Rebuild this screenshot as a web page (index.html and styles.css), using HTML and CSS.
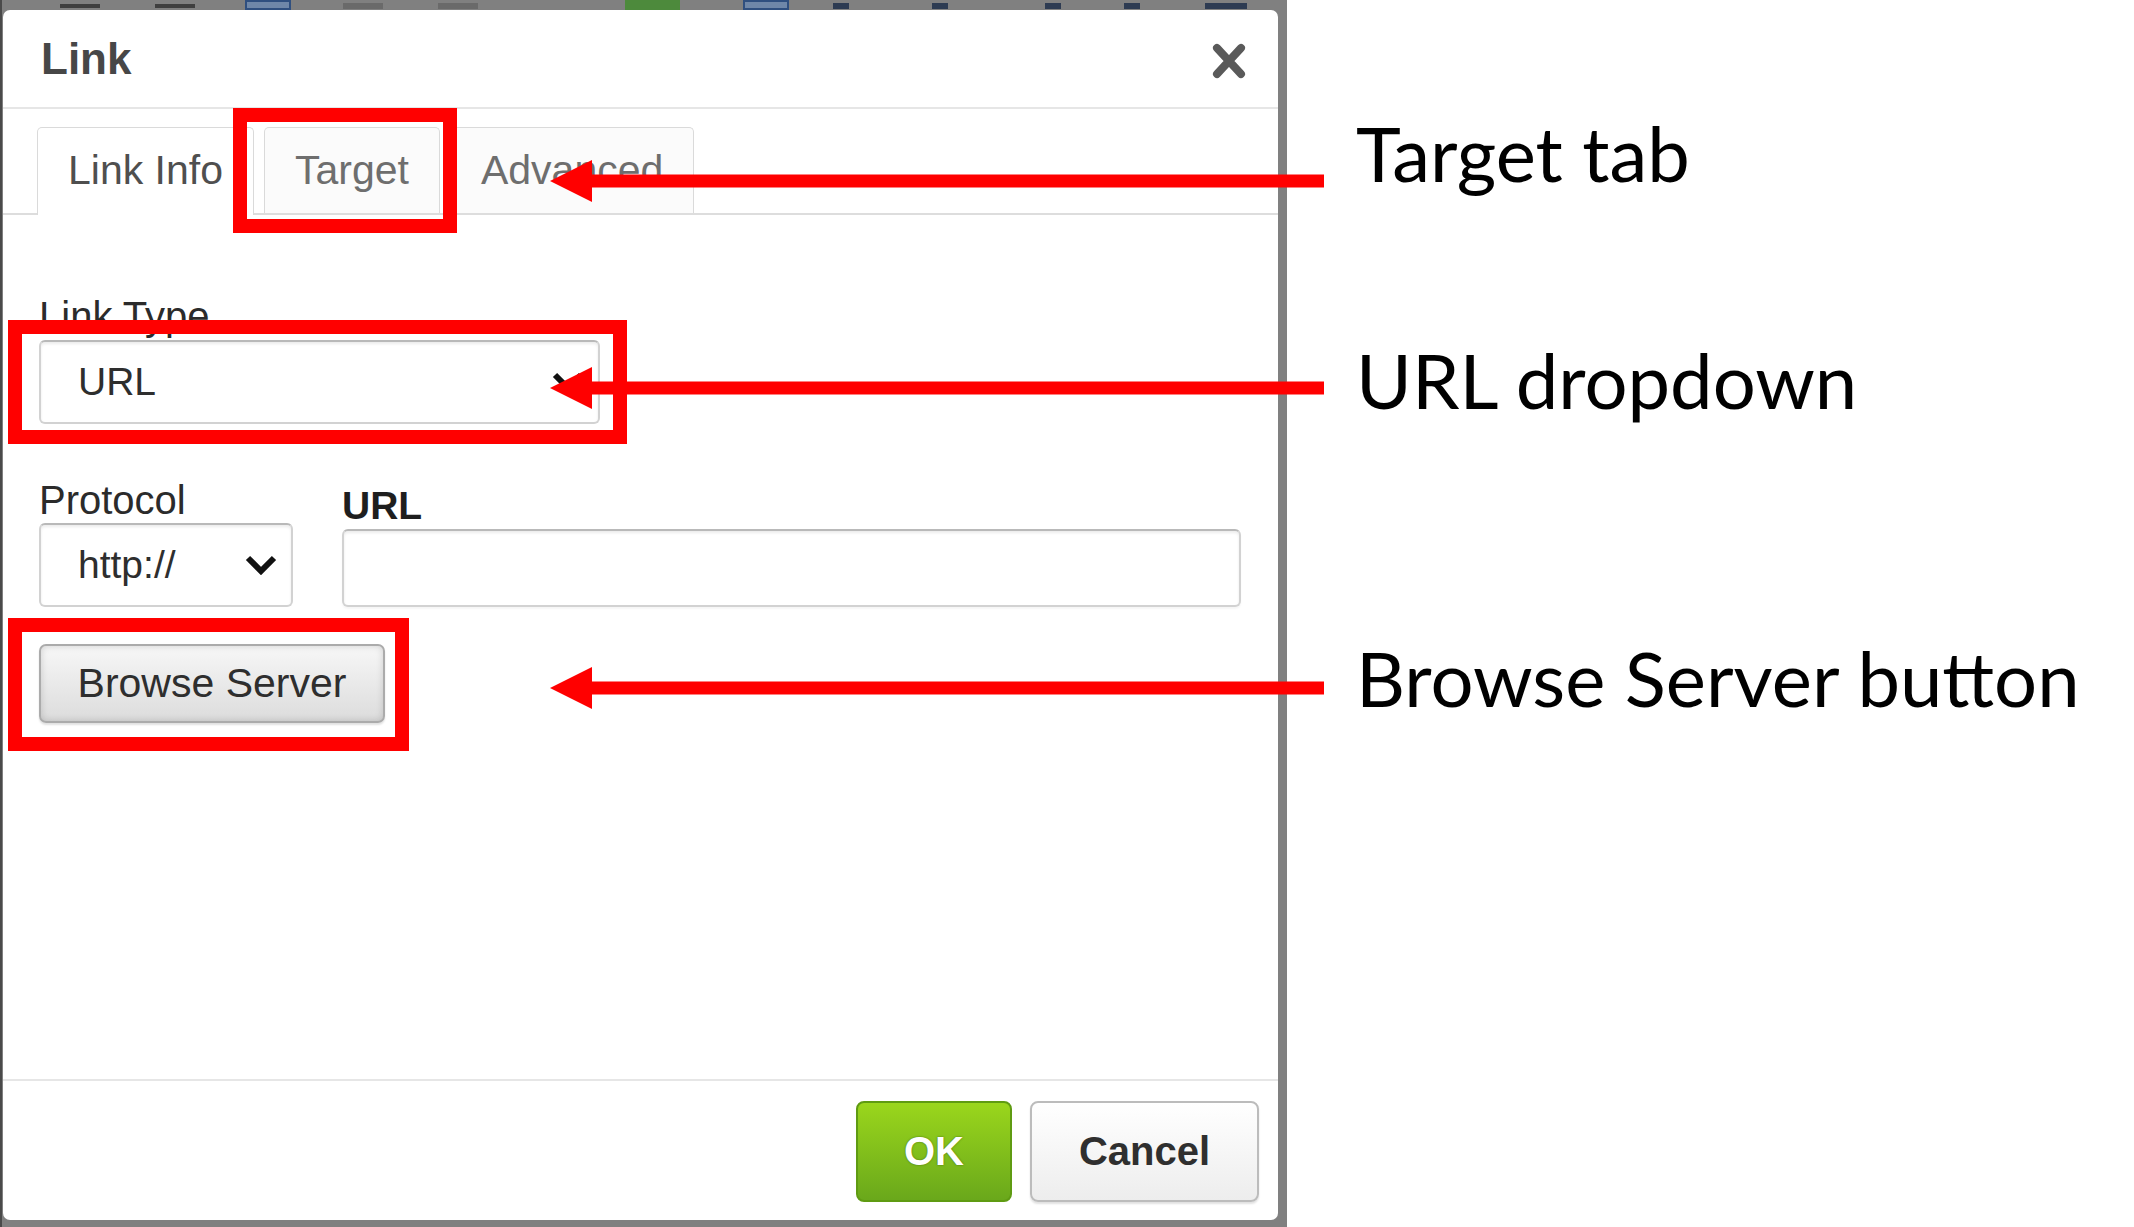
FILE: index.html
```html
<!DOCTYPE html>
<html lang="en">
<head>
    <meta charset="UTF-8">
    <title>Link dialog - annotated</title>
    <link rel="stylesheet" href="styles.css">
</head>
<body>
    <div class="page">
        <div class="editor">
            <div class="toolbar">
                <span class="tb tb-dash" style="margin-left: 57px;"></span>
                <span class="tb tb-dash" style="margin-left: 55px;"></span>
                <span class="tb tb-blue" style="margin-left: 50px;"></span>
                <span class="tb tb-grey" style="margin-left: 52px;"></span>
                <span class="tb tb-grey" style="margin-left: 55px;"></span>
                <span class="tb tb-green" style="margin-left: 147px;"></span>
                <span class="tb tb-blue" style="margin-left: 63px;"></span>
                <span class="tb tb-dark" style="margin-left: 44px;"></span>
                <span class="tb tb-dark" style="margin-left: 83px;"></span>
                <span class="tb tb-dark" style="margin-left: 97px;"></span>
                <span class="tb tb-dark" style="margin-left: 63px;"></span>
                <span class="tb tb-dark wide" style="margin-left: 65px;"></span>
            </div>

            <div class="dialog">
                <div class="dialog-title">
                    <span>Link</span>
                    <svg class="close" width="36" height="38" viewBox="0 0 36 38">
                        <path d="M6 6 L30 32 M30 6 L6 32" />
                    </svg>
                </div>

                <div class="tabs">
                    <div class="tab active">Link Info</div>
                    <div class="tab">Target</div>
                    <div class="tab">Advanced</div>
                </div>

                <div class="dialog-body">
                    <div class="field-label">Link Type</div>
                    <div class="select select-wide">
                        <span>URL</span>
                        <svg class="chevron" width="32" height="20" viewBox="0 0 32 20">
                            <polyline points="3,3 16,16 29,3" />
                        </svg>
                    </div>

                    <div class="url-row">
                        <div class="col protocol-col">
                            <div class="field-label">Protocol</div>
                            <div class="select">
                                <span>http://</span>
                                <svg class="chevron" width="32" height="20" viewBox="0 0 32 20">
                                    <polyline points="3,3 16,16 29,3" />
                                </svg>
                            </div>
                        </div>
                        <div class="col url-col">
                            <div class="field-label required">URL</div>
                            <div class="text-input"></div>
                        </div>
                    </div>

                    <button class="btn-browse">Browse Server</button>
                </div>

                <div class="dialog-footer">
                    <button class="btn-ok">OK</button>
                    <button class="btn-cancel">Cancel</button>
                </div>
            </div>
        </div>

        <!-- red highlight boxes -->
        <div class="mark mark-tab"></div>
        <div class="mark mark-select"></div>
        <div class="mark mark-browse"></div>

        <!-- arrows with notes -->
        <div class="callout callout-tab">
            <svg class="arrow" width="774" height="42" viewBox="0 0 774 42">
                <polygon points="0,21 42,0 42,42" />
                <rect x="40" y="14.5" width="734" height="13" />
            </svg>
            <span class="note">Target tab</span>
        </div>
        <div class="callout callout-select">
            <svg class="arrow" width="774" height="42" viewBox="0 0 774 42">
                <polygon points="0,21 42,0 42,42" />
                <rect x="40" y="14.5" width="734" height="13" />
            </svg>
            <span class="note">URL dropdown</span>
        </div>
        <div class="callout callout-browse">
            <svg class="arrow" width="774" height="42" viewBox="0 0 774 42">
                <polygon points="0,21 42,0 42,42" />
                <rect x="40" y="14.5" width="734" height="13" />
            </svg>
            <span class="note">Browse Server button</span>
        </div>
    </div>
</body>
</html>
```

FILE: styles.css
```css
body {
    margin: 0;
    background: #fff;
    font-family: "Liberation Sans", Arial, sans-serif;
}
.page {
    position: relative;
    width: 2134px;
    height: 1227px;
    overflow: hidden;
}

/* editor frame behind the dialog */
.editor {
    width: 1287px;
    height: 1227px;
    box-sizing: border-box;
    background: #808080;
    border-left: 2px solid #4a4a4a;
    padding: 0 9px 7px 1px;
    display: flex;
    flex-direction: column;
}
.toolbar {
    height: 10px;
    display: flex;
    align-items: flex-start;
    overflow: hidden;
}
.tb {
    display: block;
    flex: none;
    width: 40px;
    height: 4px;
    margin-top: 4px;
}
.tb-dash { background: #3f3f3f; }
.tb-blue {
    width: 46px;
    height: 10px;
    margin-top: 0;
    background: #6f87a8;
    border: 2px solid #2f4f7f;
    box-sizing: border-box;
}
.tb-grey { background: #6a6a6a; height: 6px; margin-top: 3px; }
.tb-green { width: 55px; height: 10px; margin-top: 0; background: #4d8a3c; }
.tb-dark { width: 16px; height: 6px; margin-top: 3px; background: #2d3b52; }
.tb-dark.wide { width: 42px; }

.dialog {
    flex: 1;
    background: #fff;
    border-radius: 7px;
    display: flex;
    flex-direction: column;
    overflow: hidden;
}

.dialog-title {
    height: 97px;
    flex: none;
    border-bottom: 2px solid #e6e6e6;
    display: flex;
    align-items: center;
    justify-content: space-between;
    padding: 0 31px 0 38px;
    font-size: 44px;
    line-height: 44px;
    font-weight: bold;
    color: #474747;
}
.dialog-title .close {
    margin-top: 5px;
}
.dialog-title .close path {
    stroke: #5a5a5a;
    stroke-width: 8;
    stroke-linecap: round;
    fill: none;
}

.tabs {
    flex: none;
    display: flex;
    align-items: flex-end;
    gap: 10px;
    padding: 18px 0 0 34px;
    border-bottom: 2px solid #dddddd;
}
.tab {
    height: 85px;
    line-height: 85px;
    padding: 0 30px;
    border: 1px solid #dadada;
    border-bottom: none;
    border-radius: 5px 5px 0 0;
    background: #fbfbfb;
    font-size: 41px;
    color: #6e6e6e;
}
.tab.active {
    height: 87px;
    margin-bottom: -2px;
    background: #fff;
    color: #4f4f4f;
}

.dialog-body {
    flex: 1;
    padding: 78px 37px 0 36px;
}
.field-label {
    font-size: 40px;
    line-height: 46px;
    color: #2b2b2b;
    margin-bottom: 1px;
}
.field-label.required {
    font-weight: bold;
    font-size: 39px;
    color: #1e1e1e;
    margin-bottom: 0;
}

.select {
    height: 84px;
    box-sizing: border-box;
    border: 2px solid #d2d2d2;
    border-top-color: #b9b9b9;
    border-radius: 6px;
    box-shadow: inset 0 2px 3px rgba(0, 0, 0, 0.08);
    display: flex;
    align-items: center;
    justify-content: space-between;
    padding: 0 14px 0 37px;
    font-size: 39px;
    color: #2e2e2e;
    background: #fff;
}
.select-wide {
    width: 561px;
}
.select .chevron polyline {
    fill: none;
    stroke: #111;
    stroke-width: 6;
}

.url-row {
    margin-top: 53px;
    display: flex;
    align-items: flex-end;
    gap: 49px;
}
.col {
    display: flex;
    flex-direction: column;
}
.protocol-col {
    width: 254px;
}
.protocol-col .field-label {
    margin-bottom: 0;
}
.url-col {
    width: 899px;
}
.text-input {
    height: 78px;
    box-sizing: border-box;
    border: 2px solid #d2d2d2;
    border-top-color: #b9b9b9;
    border-radius: 6px;
    box-shadow: inset 0 2px 3px rgba(0, 0, 0, 0.08), 0 2px 2px rgba(0, 0, 0, 0.04);
    background: #fff;
}

.btn-browse {
    display: block;
    margin-top: 37px;
    width: 346px;
    height: 79px;
    padding: 0;
    border: 2px solid #ababab;
    border-radius: 7px;
    background: linear-gradient(#f7f7f7, #dcdcdc);
    box-shadow: inset 0 0 7px rgba(0, 0, 0, 0.16), 0 2px 2px rgba(0, 0, 0, 0.12);
    font-family: "Liberation Sans", Arial, sans-serif;
    font-size: 41px;
    color: #2e2e2e;
}

.dialog-footer {
    flex: none;
    border-top: 2px solid #e6e6e6;
    padding: 20px 19px 18px;
    display: flex;
    justify-content: flex-end;
    gap: 18px;
}
.dialog-footer button {
    height: 101px;
    border-radius: 8px;
    font-family: "Liberation Sans", Arial, sans-serif;
    font-weight: bold;
    font-size: 40px;
    padding: 0;
}
.btn-ok {
    width: 156px;
    border: 2px solid #5f9b12;
    background: linear-gradient(#9ad61c, #6aa81b);
    color: #fff;
    text-shadow: 0 0 2px rgba(40, 70, 0, 0.7);
}
.btn-cancel {
    width: 229px;
    border: 2px solid #bcbcbc;
    background: linear-gradient(#ffffff, #ededed);
    box-shadow: 0 2px 2px rgba(0, 0, 0, 0.12);
    color: #2f2f2f;
}

/* annotation layer */
.mark {
    position: absolute;
    box-sizing: border-box;
    border: 14px solid #ff0000;
}
.mark-tab { left: 233px; top: 108px; width: 224px; height: 125px; }
.mark-select { left: 8px; top: 320px; width: 619px; height: 124px; }
.mark-browse { left: 8px; top: 618px; width: 401px; height: 133px; }

.callout {
    position: absolute;
    left: 550px;
    display: flex;
    align-items: flex-start;
}
.callout .arrow {
    flex: none;
    fill: #ff0000;
}
.callout-tab { top: 160px; }
.callout-select { top: 367px; }
.callout-browse { top: 667px; }

.note {
    margin-left: 32px;
    font-family: Lato, "Open Sans", sans-serif;
    font-size: 76px;
    line-height: 76px;
    color: #000;
    white-space: nowrap;
}
.callout-tab .note { margin-top: -45px; }
.callout-select .note { margin-top: -25px; }
.callout-browse .note { margin-top: -27px; }
```
